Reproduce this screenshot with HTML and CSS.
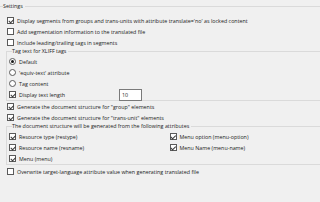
FILE: index.html
```html
<!DOCTYPE html>
<html>
<head>
<meta charset="utf-8">
<link rel="stylesheet" href="styles.css">
</head>
<body>
<fieldset class="group outer">
  <legend class="legend">Settings</legend>
  <div class="row"><span class="cb on"></span><span class="lbl">Display segments from groups and trans-units with attribute translate='no' as locked content</span></div>
  <div class="row"><span class="cb"></span><span class="lbl">Add segmentation information to the translated file</span></div>
  <div class="row"><span class="cb"></span><span class="lbl">Include leading/trailing tags in segments</span></div>
  <fieldset class="group inner">
    <legend class="legend">Tag text for XLIFF tags</legend>
    <div class="row"><span class="rb on"></span><span class="lbl">Default</span></div>
    <div class="row"><span class="rb"></span><span class="lbl">'equiv-text' attribute</span></div>
    <div class="row"><span class="rb"></span><span class="lbl">Tag content</span></div>
    <div class="row"><span class="cb on"></span><span class="lbl len">Display text length</span><span class="num">10</span></div>
  </fieldset>
  <div class="row"><span class="cb on"></span><span class="lbl">Generate the document structure for "group" elements</span></div>
  <div class="row"><span class="cb on"></span><span class="lbl">Generate the document structure for "trans-unit" elements</span></div>
  <fieldset class="group inner attrs">
    <legend class="legend">The document structure will be generated from the following attributes</legend>
    <div class="cols">
      <div class="col">
        <div class="row"><span class="cb on"></span><span class="lbl">Resource type (restype)</span></div>
        <div class="row"><span class="cb on"></span><span class="lbl">Resource name (resname)</span></div>
        <div class="row"><span class="cb on"></span><span class="lbl">Menu (menu)</span></div>
      </div>
      <div class="col right">
        <div class="row"><span class="cb on"></span><span class="lbl">Menu option (menu-option)</span></div>
        <div class="row"><span class="cb on"></span><span class="lbl">Menu Name (menu-name)</span></div>
      </div>
    </div>
  </fieldset>
  <div class="row last"><span class="cb"></span><span class="lbl">Overwrite target-language attribute value when generating translated file</span></div>
</fieldset>
</body>
</html>
```
FILE: styles.css
```css
html, body {
  margin: 0;
  padding: 0;
  background: #f0f0f0;
  width: 320px;
  height: 202px;
  overflow: hidden;
}
body {
  font-family: "Open Sans", "Noto Sans", sans-serif;
  font-size: 5.35px;
  color: #222;
}
.group {
  margin: 0;
  padding: 0;
  min-width: 0;
  border: none;
  border-top: 1px solid #dadada;
}
.outer {
  margin-top: 3px;
  padding: 5px 0 0 7px;
  margin-right: -10px;
}
.legend {
  padding: 0 2px 0 0;
  margin-left: 3px;
  font-size: 5.35px;
  line-height: 7px;
}
.outer > .legend { margin-left: -4px; }
.inner {
  margin: 0 0 0 -1px;
  border-left: 1px solid #dadada;
  border-bottom: 1px solid #dadada;
  padding: 1px 0 0 2px;
}
.attrs { padding-bottom: 0; }
.row {
  display: flex;
  align-items: center;
  height: 11px;
}
.last { margin-top: 1px; }
.cb, .rb {
  flex: none;
  width: 5px;
  height: 5px;
  border: 1px solid #5a5a5a;
  background: #fff;
  margin-right: 3px;
  position: relative;
  box-sizing: content-box;
}
.rb { border-radius: 50%; }
.cb.on::after {
  content: "";
  position: absolute;
  left: 1.5px;
  top: -0.5px;
  width: 1.5px;
  height: 3.5px;
  border: solid #3a3a3a;
  border-width: 0 1px 1px 0;
  transform: rotate(45deg);
}
.rb.on::after {
  content: "";
  position: absolute;
  left: 1px;
  top: 1px;
  width: 3px;
  height: 3px;
  border-radius: 50%;
  background: #1a1a1a;
}
.lbl { white-space: nowrap; }
.len { width: 100px; }
.num {
  width: 19px;
  height: 10px;
  border: 1px solid #7a7a7a;
  background: #fff;
  line-height: 10px;
  padding-left: 2px;
  box-sizing: content-box;
}
.cols { display: flex; }
.col { width: 195px; }
```
